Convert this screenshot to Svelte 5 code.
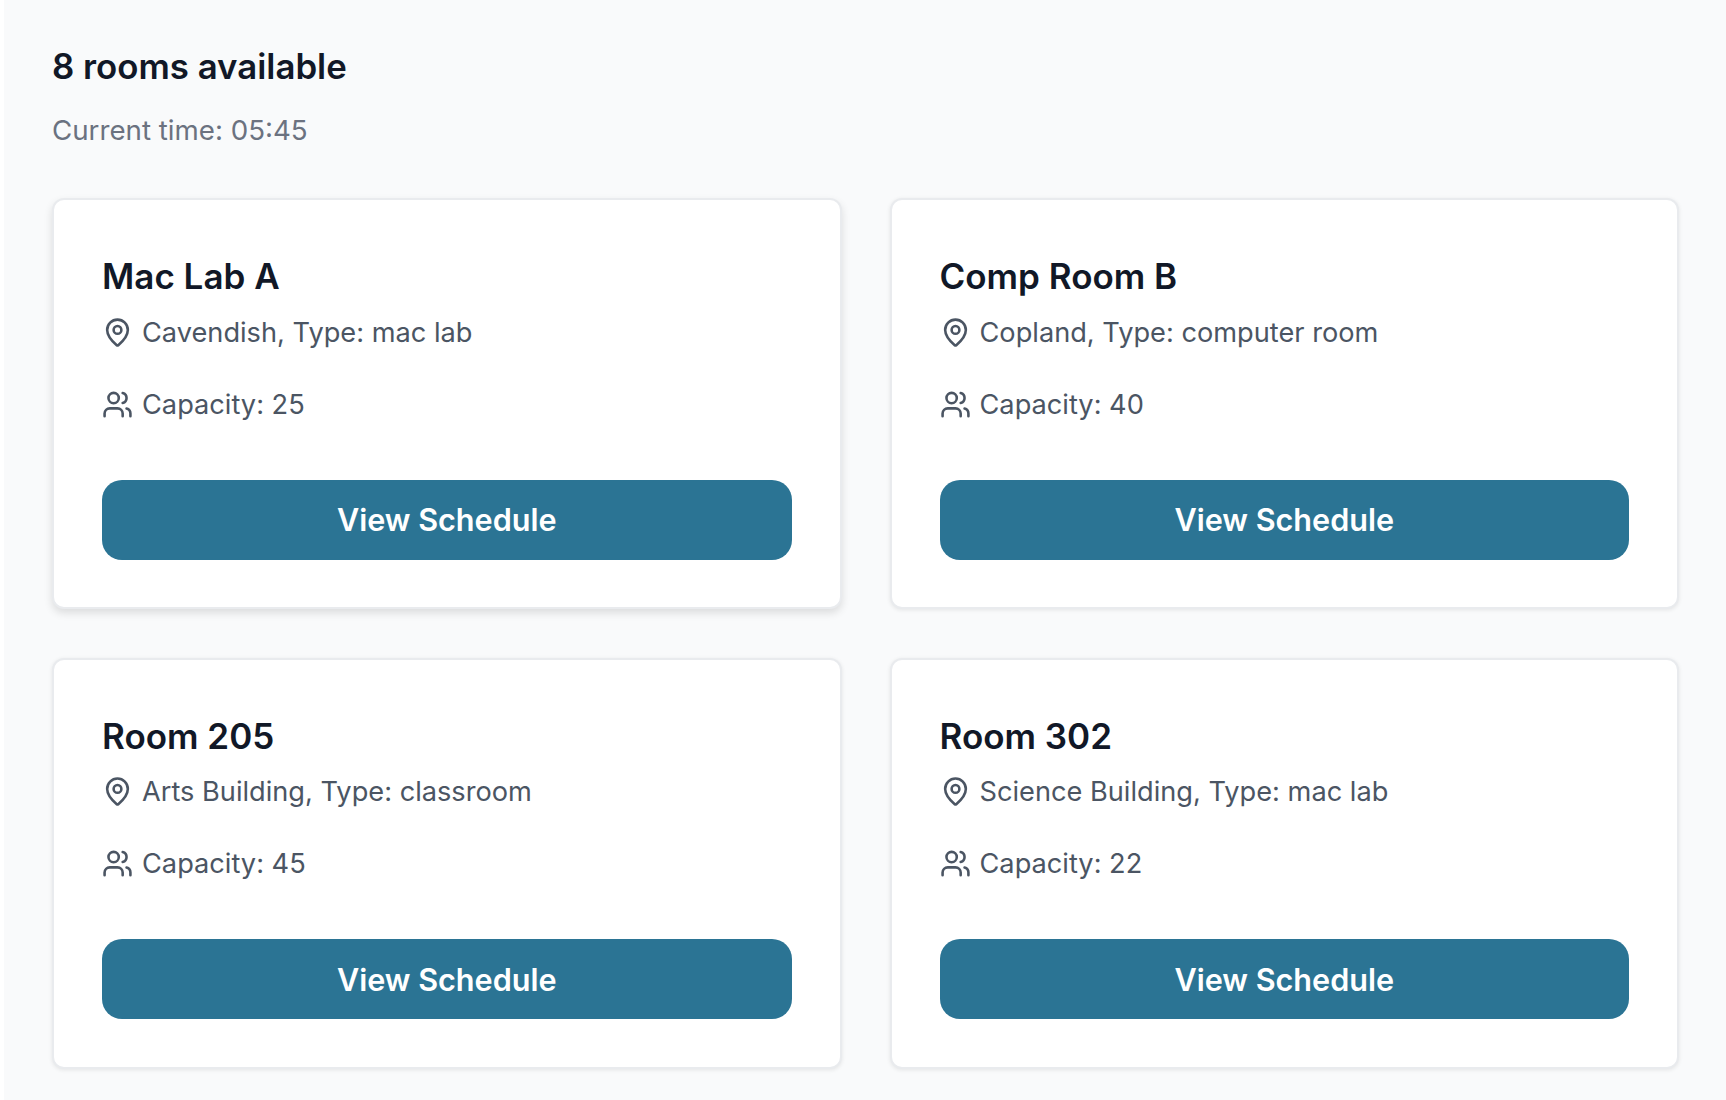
<script>
  const rooms = [
    { name: 'Mac Lab A', place: 'Cavendish, Type: mac lab', capacity: 25, raised: true },
    { name: 'Comp Room B', place: 'Copland, Type: computer room', capacity: 40 },
    { name: 'Room 205', place: 'Arts Building, Type: classroom', capacity: 45 },
    { name: 'Room 302', place: 'Science Building, Type: mac lab', capacity: 22 }
  ];
</script>

<main class="page">
  <h2 class="count">8 rooms available</h2>
  <p class="time">Current time: 05:45</p>
  <div class="grid">
    {#each rooms as room}
      <article class="card" class:raised={room.raised}>
        <h3 class="name">{room.name}</h3>
        <div class="line">
          <svg class="icon" viewBox="0 0 24 24" fill="none" stroke="currentColor" stroke-width="2" stroke-linecap="round" stroke-linejoin="round">
            <path d="M20 10c0 4.993-5.539 10.193-7.399 11.799a1 1 0 0 1-1.202 0C9.539 20.193 4 14.993 4 10a8 8 0 0 1 16 0" />
            <circle cx="12" cy="10" r="3" />
          </svg>
          <span>{room.place}</span>
        </div>
        <div class="line">
          <svg class="icon" viewBox="0 0 24 24" fill="none" stroke="currentColor" stroke-width="2" stroke-linecap="round" stroke-linejoin="round">
            <path d="M16 21v-2a4 4 0 0 0-4-4H6a4 4 0 0 0-4 4v2" />
            <circle cx="9" cy="7" r="4" />
            <path d="M22 21v-2a4 4 0 0 0-3-3.87" />
            <path d="M16 3.13a4 4 0 0 1 0 7.75" />
          </svg>
          <span>Capacity: {room.capacity}</span>
        </div>
        <button class="view">View Schedule</button>
      </article>
    {/each}
  </div>
</main>

<style>
  :global(body) {
    margin: 0;
    background: #ffffff;
    font-family: Inter, "Liberation Sans", sans-serif;
  }
  .page {
    box-sizing: border-box;
    margin-left: 4px;
    height: 1100px;
    overflow: hidden;
    padding: 45px 46px 0 48px;
    background: #f9fafb;
  }
  .count {
    margin: 0;
    font-size: 34.8px;
    line-height: 42px;
    font-weight: 600;
    color: #111827;
  }
  .time {
    margin: 23px 0 0;
    font-size: 27.7px;
    line-height: 40px;
    color: #6b7280;
  }
  .grid {
    display: grid;
    grid-template-columns: 789.5px 789.5px;
    column-gap: 48px;
    row-gap: 48.5px;
    margin-top: 48px;
  }
  .card {
    box-sizing: border-box;
    height: 411px;
    padding: 55px 48px 0;
    background: #fff;
    border: 2px solid #e9ebee;
    border-radius: 12px;
    box-shadow: 0 1px 4px rgba(0, 0, 0, 0.09);
  }
  .raised {
    box-shadow: 0 4px 9px rgba(0, 0, 0, 0.12);
  }
  .name {
    margin: 0;
    font-size: 35px;
    line-height: 42px;
    font-weight: 600;
    color: #111827;
  }
  .line {
    display: flex;
    align-items: center;
    gap: 9px;
    height: 40px;
    margin-top: 15px;
    font-size: 27.2px;
    color: #4b5563;
  }
  .line + .line {
    margin-top: 32px;
  }
  .icon {
    width: 31px;
    height: 31px;
    flex: none;
  }
  .view {
    display: block;
    width: 100%;
    height: 80px;
    margin-top: 55.5px;
    border: 0;
    border-radius: 20px;
    background: #2b7494;
    color: #fff;
    font: 600 30.6px Inter, "Liberation Sans", sans-serif;
  }
</style>
